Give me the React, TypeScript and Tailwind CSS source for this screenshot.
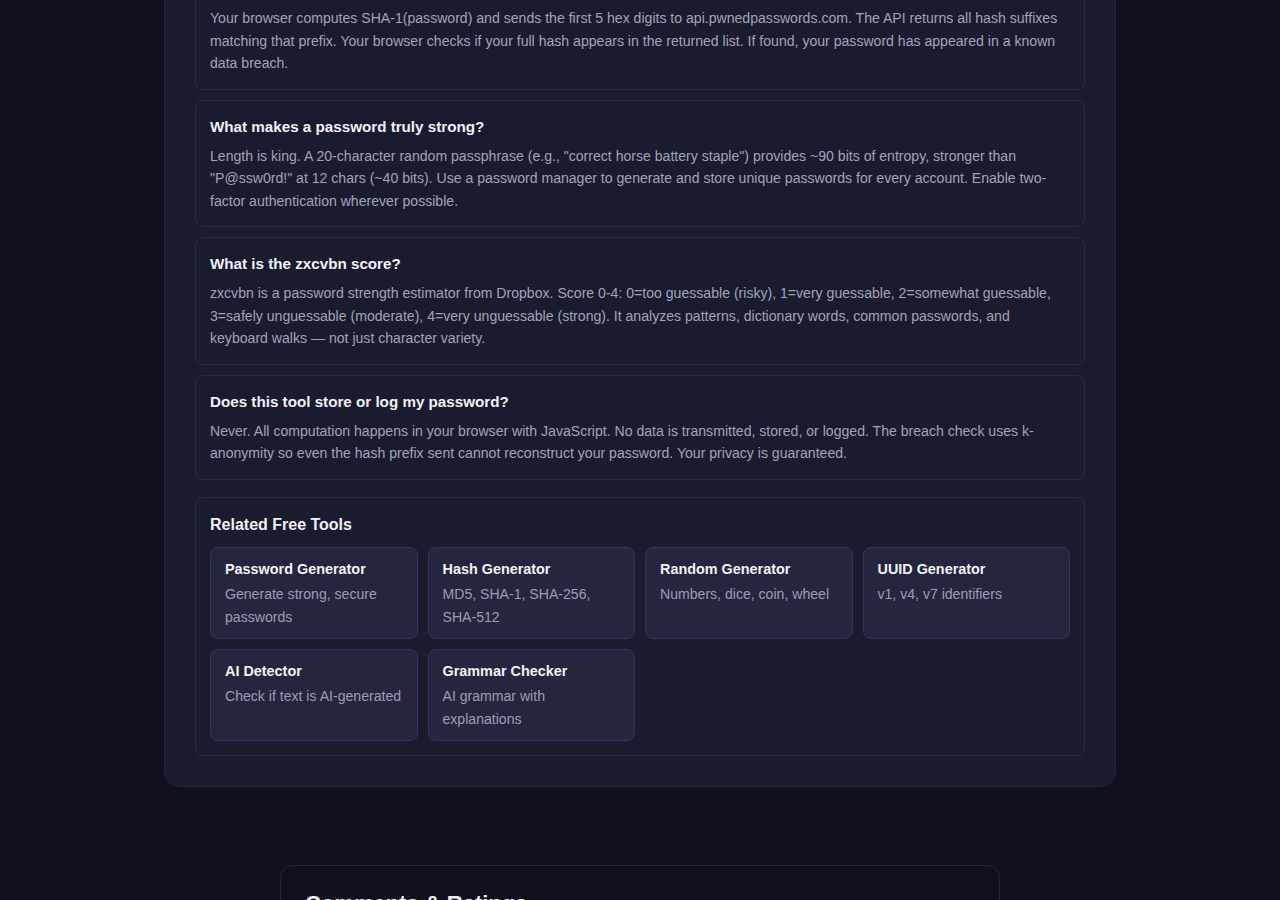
import React from "react";

type Faq = { q: string; a: string };

const faqs: Faq[] = [
  {
    q: "How does the breach check work?",
    a: "Your browser computes SHA-1(password) and sends the first 5 hex digits to api.pwnedpasswords.com. The API returns all hash suffixes matching that prefix. Your browser checks if your full hash appears in the returned list. If found, your password has appeared in a known data breach.",
  },
  {
    q: "What makes a password truly strong?",
    a: 'Length is king. A 20-character random passphrase (e.g., "correct horse battery staple") provides ~90 bits of entropy, stronger than "P@ssw0rd!" at 12 chars (~40 bits). Use a password manager to generate and store unique passwords for every account. Enable two-factor authentication wherever possible.',
  },
  {
    q: "What is the zxcvbn score?",
    a: "zxcvbn is a password strength estimator from Dropbox. Score 0-4: 0=too guessable (risky), 1=very guessable, 2=somewhat guessable, 3=safely unguessable (moderate), 4=very unguessable (strong). It analyzes patterns, dictionary words, common passwords, and keyboard walks — not just character variety.",
  },
  {
    q: "Does this tool store or log my password?",
    a: "Never. All computation happens in your browser with JavaScript. No data is transmitted, stored, or logged. The breach check uses k-anonymity so even the hash prefix sent cannot reconstruct your password. Your privacy is guaranteed.",
  },
];

const tools = [
  { name: "Password Generator", desc: "Generate strong, secure passwords" },
  { name: "Hash Generator", desc: "MD5, SHA-1, SHA-256, SHA-512" },
  { name: "Random Generator", desc: "Numbers, dice, coin, wheel" },
  { name: "UUID Generator", desc: "v1, v4, v7 identifiers" },
  { name: "AI Detector", desc: "Check if text is AI-generated" },
  { name: "Grammar Checker", desc: "AI grammar with explanations" },
];

function FaqItem({ q, a }: Faq) {
  return (
    <div className="rounded-lg border border-[#2c2c3c] bg-[#1b1b2f] px-[14px] pt-4 pb-[14px]">
      <h3 className="text-[0.95rem] font-bold leading-5 text-[#f2f2f7]">{q}</h3>
      <p className="mt-2 text-[0.88rem] leading-[1.6] text-[#a3a3b8]">{a}</p>
    </div>
  );
}

export default function App() {
  return (
    <div
      className="min-h-screen overflow-hidden bg-[#10101f] pb-20"
      style={{ fontFamily: '"Liberation Sans", Arial, sans-serif' }}
    >
      {/* page is scrolled a little: the top of the card sits above the fold */}
      <div className="-mt-[69px]">
        <section className="mx-auto w-[952px] rounded-2xl border border-[#26263f] bg-[#1b1b2e] p-[30px]">
          <div className="flex flex-col gap-[10px]">
            {faqs.map((f) => (
              <FaqItem key={f.q} {...f} />
            ))}
          </div>

          {/* Related tools */}
          <div className="mt-[17px] rounded-lg border border-[#2c2c3c] bg-[#1b1b2f] px-[14px] pt-4 pb-[14px]">
            <h3 className="text-base font-bold leading-[22px] text-[#f2f2f7]">
              Related Free Tools
            </h3>
            <div className="mt-[11px] grid grid-cols-4 gap-[10px]">
              {tools.map((t) => (
                <a
                  key={t.name}
                  href="#"
                  className="block h-[92px] rounded-lg border border-[#34345a] bg-[#252540] px-[14px] pt-[11px]"
                >
                  <div className="text-[0.9rem] font-bold leading-5 text-[#f2f2f7]">{t.name}</div>
                  <div className="mt-[4px] text-[0.88rem] leading-[23px] text-[#9d9db4]">{t.desc}</div>
                </a>
              ))}
            </div>
          </div>
        </section>

        {/* Comments */}
        <section className="mx-auto mt-[78px] w-[720px] rounded-xl border border-[#262638] bg-[#10101f] px-6 pt-6 pb-10">
          <h2 className="text-[22px] font-bold leading-7 text-[#f2f2f7]">Comments &amp; Ratings</h2>
        </section>
      </div>
    </div>
  );
}
